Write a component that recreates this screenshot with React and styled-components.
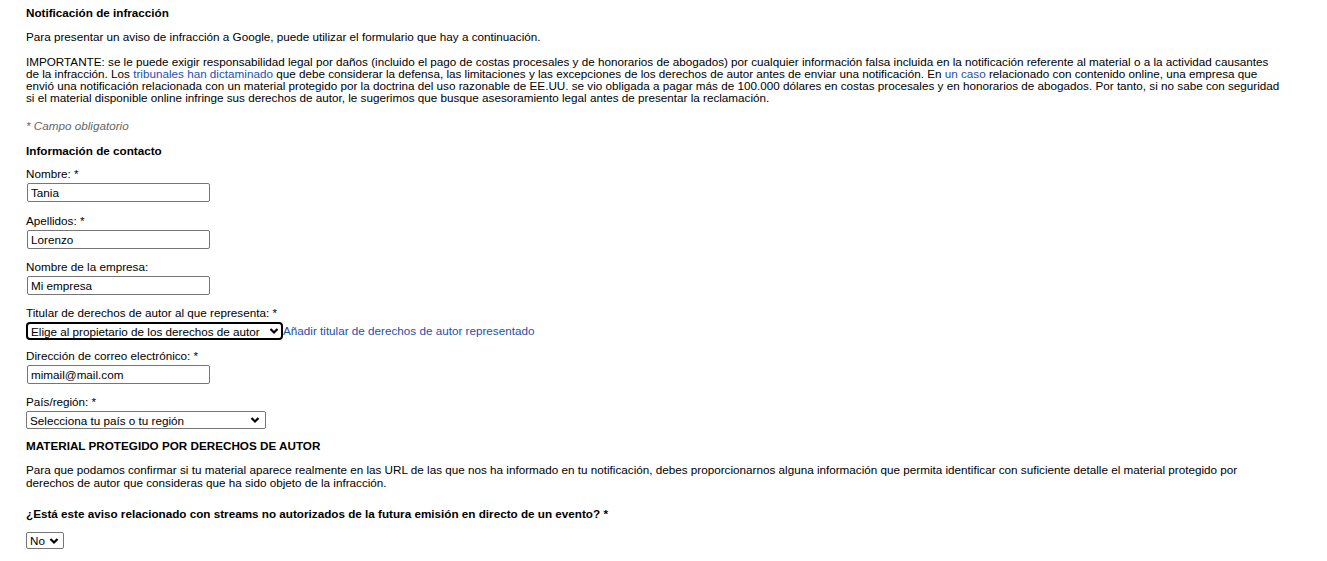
import React from "react";
import styled, { createGlobalStyle } from "styled-components";

const Global = createGlobalStyle`
  html, body { margin: 0; padding: 0; background: #fff; }
  body { font-family: "Liberation Sans", Arial, sans-serif; font-size: 11.7px; color: #000; }
`;

const Page = styled.div`
  width: 1257px;
  padding: 6px 0 20px 26px;
  font-size: 11.7px;
  line-height: 12px;
`;

const Heading = styled.h2`
  margin: 0 0 ${(p) => p.$mb ?? 12}px;
  font-size: 11.7px;
  line-height: 14px;
  font-weight: bold;
`;

const Para = styled.p`
  margin: 0 0 ${(p) => p.$mb ?? 12}px;
  line-height: ${(p) => p.$lh || 12}px;
`;

const Link = styled.a`
  color: #1f4fad;
  text-decoration: none;
`;

const Required = styled.p`
  margin: 0 0 11px;
  font-style: italic;
  color: #666;
  line-height: 14px;
`;

const Field = styled.div`
  display: flex;
  flex-direction: column;
  align-items: flex-start;
  margin-bottom: ${(p) => p.$mb ?? 11}px;
`;

const Label = styled.label`
  line-height: 14px;
  margin-bottom: 2px;
`;

const TextInput = styled.input`
  box-sizing: border-box;
  width: 183px;
  height: 19px;
  margin: 0 0 0 1px;
  padding: 1px 3px;
  border: 1px solid #767676;
  border-radius: 2px;
  font-family: "Liberation Sans", Arial, sans-serif;
  font-size: 11.7px;
  color: #000;
  background: #fff;
`;

const SelectRow = styled.div`
  display: flex;
  align-items: center;
`;

const SelectWrap = styled.div`
  position: relative;
  display: inline-flex;
`;

const Select = styled.select`
  appearance: none;
  box-sizing: border-box;
  width: ${(p) => p.$w}px;
  height: ${(p) => p.$h || 18}px;
  margin: 0;
  padding: 0 16px 0 3px;
  border: ${(p) => (p.$focus ? "2px solid #000" : "1px solid #767676")};
  border-radius: ${(p) => (p.$focus ? "4px" : "2px")};
  font-family: "Liberation Sans", Arial, sans-serif;
  font-size: 11.7px;
  color: #000;
  background: #fff;
  outline: none;
`;

const Chevron = styled.svg`
  position: absolute;
  right: ${(p) => p.$r || 5}px;
  top: 50%;
  transform: translateY(-50%);
  pointer-events: none;
`;

const Question = styled.h3`
  margin: 0 0 11px;
  font-size: 11.7px;
  line-height: 14px;
  font-weight: bold;
`;

function Arrow({ r }) {
  return (
    <Chevron $r={r} width="10" height="7" viewBox="0 0 10 7">
      <path d="M1.5 1.5 L5 5 L8.5 1.5" fill="none" stroke="#000" strokeWidth="2.2" />
    </Chevron>
  );
}

function Dropdown({ w, h, focus, value, r }) {
  return (
    <SelectWrap>
      <Select $w={w} $h={h} $focus={focus} defaultValue={value}>
        <option>{value}</option>
      </Select>
      <Arrow r={r} />
    </SelectWrap>
  );
}

export default function App() {
  return (
    <>
      <Global />
      <Page>
        <Heading $mb={11}>Notificación de infracción</Heading>
        <Para $mb={13}>
          Para presentar un aviso de infracción a Google, puede utilizar el formulario que hay a continuación.
        </Para>
        <Para $mb={15}>
          IMPORTANTE: se le puede exigir responsabilidad legal por daños (incluido el pago de costas procesales y de
          honorarios de abogados) por cualquier información falsa incluida en la notificación referente al material o a la
          actividad causantes de la infracción. Los <Link href="#">tribunales han dictaminado</Link> que debe considerar
          la defensa, las limitaciones y las excepciones de los derechos de autor antes de enviar una notificación. En{" "}
          <Link href="#">un caso</Link> relacionado con contenido online, una empresa que envió una notificación
          relacionada con un material protegido por la doctrina del uso razonable de EE.UU. se vio obligada a pagar más de
          100.000 dólares en costas procesales y en honorarios de abogados. Por tanto, si no sabe con seguridad si el
          material disponible online infringe sus derechos de autor, le sugerimos que busque asesoramiento legal antes de
          presentar la reclamación.
        </Para>
        <Required>* Campo obligatorio</Required>
        <Heading $mb={9}>Información de contacto</Heading>

        <Field $mb={12}>
          <Label>Nombre: *</Label>
          <TextInput defaultValue="Tania" />
        </Field>
        <Field>
          <Label>Apellidos: *</Label>
          <TextInput defaultValue="Lorenzo" />
        </Field>
        <Field>
          <Label>Nombre de la empresa:</Label>
          <TextInput defaultValue="Mi empresa" />
        </Field>
        <Field $mb={9}>
          <Label>Titular de derechos de autor al que representa: *</Label>
          <SelectRow>
            <Dropdown w={257} h={18} focus value="Elige al propietario de los derechos de autor" r={4} />
            <Link href="#">Añadir titular de derechos de autor representado</Link>
          </SelectRow>
        </Field>
        <Field>
          <Label>Dirección de correo electrónico: *</Label>
          <TextInput defaultValue="mimail@mail.com" />
        </Field>
        <Field $mb={10}>
          <Label>País/región: *</Label>
          <Dropdown w={240} h={18} value="Selecciona tu país o tu región" r={6} />
        </Field>

        <Heading $mb={10}>MATERIAL PROTEGIDO POR DERECHOS DE AUTOR</Heading>
        <Para $mb={18} $lh={13}>
          Para que podamos confirmar si tu material aparece realmente en las URL de las que nos ha informado en tu
          notificación, debes proporcionarnos alguna información que permita identificar con suficiente detalle el
          material protegido por derechos de autor que consideras que ha sido objeto de la infracción.
        </Para>
        <Question>¿Está este aviso relacionado con streams no autorizados de la futura emisión en directo de un evento? *</Question>
        <Dropdown w={38} h={17} value="No" r={5} />
      </Page>
    </>
  );
}
